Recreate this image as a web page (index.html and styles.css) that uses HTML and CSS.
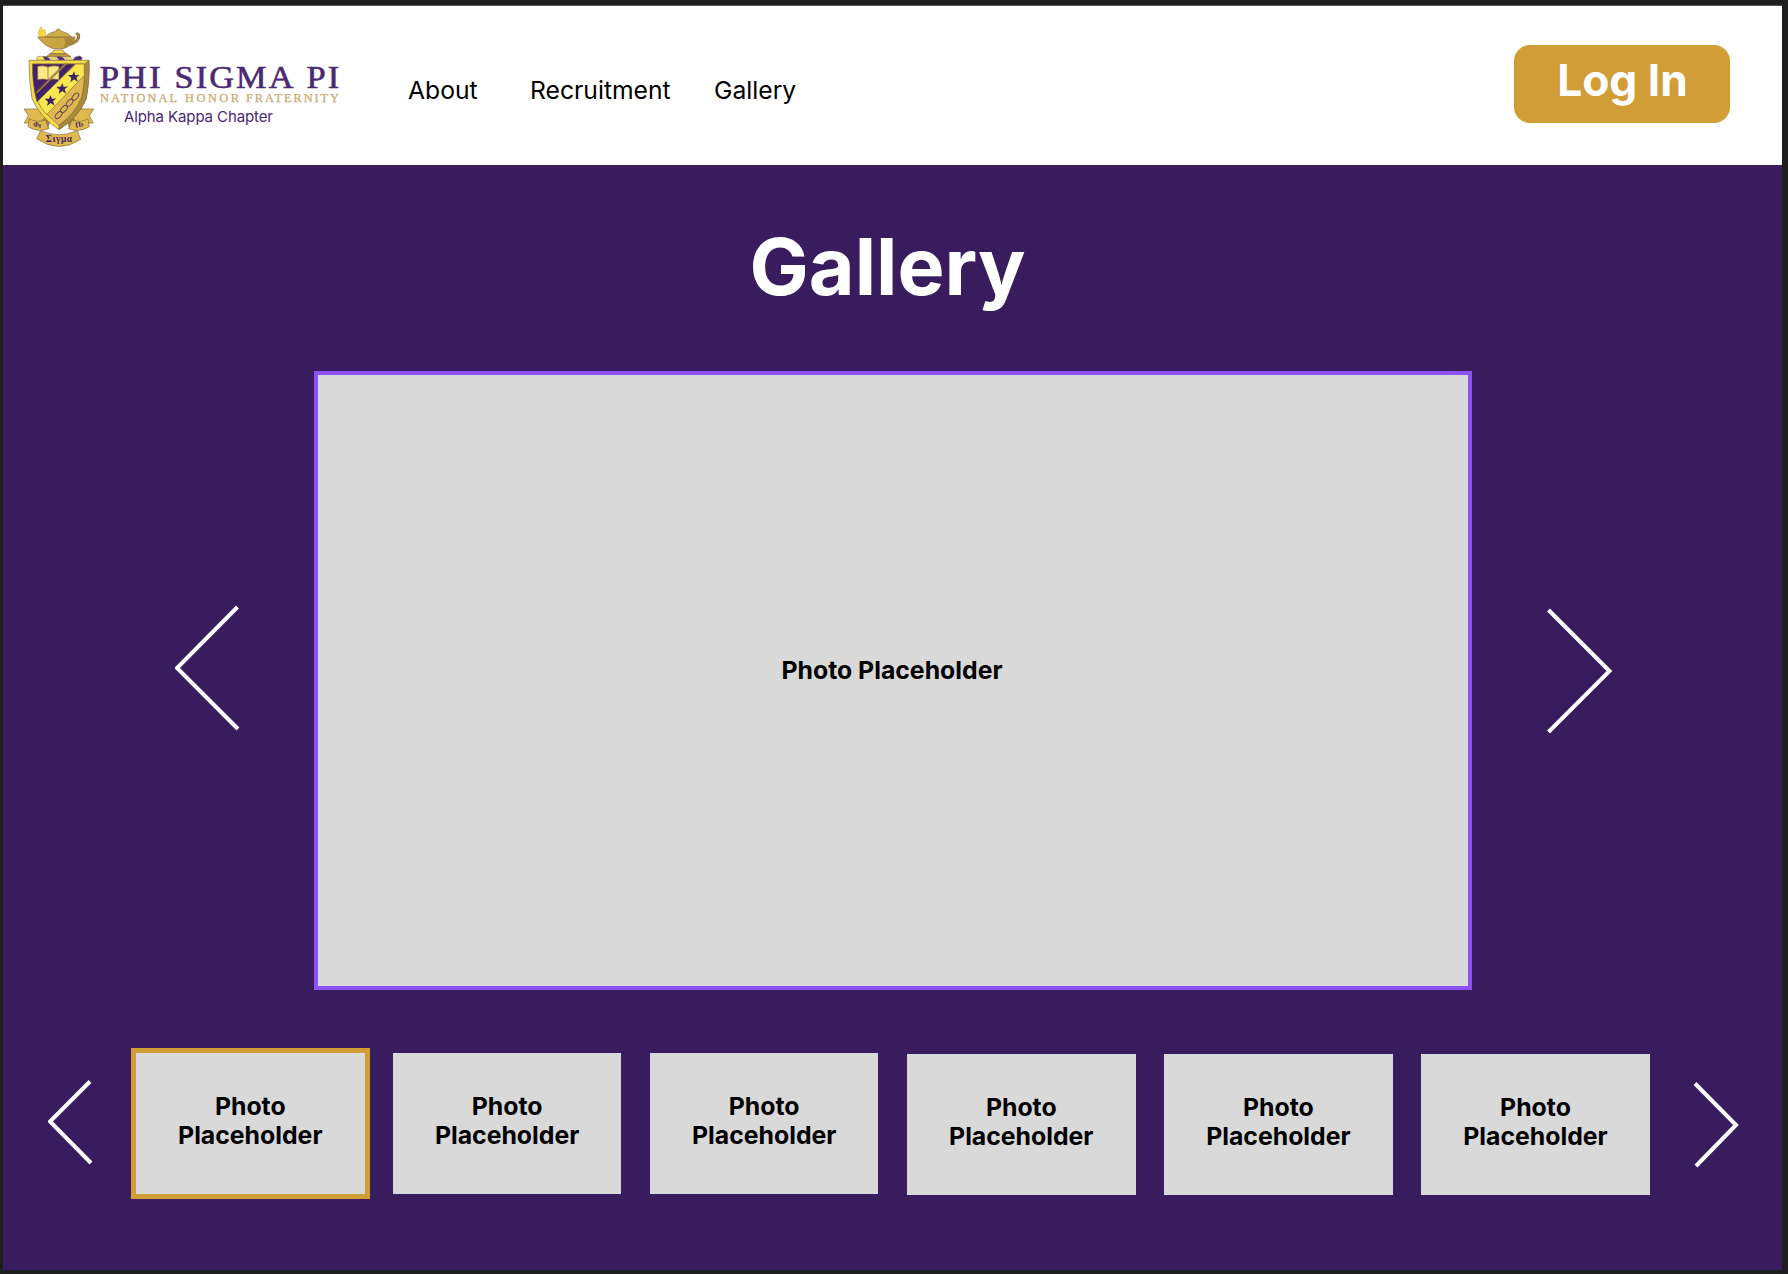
FILE: index.html
```html
<!DOCTYPE html>
<html lang="en">
<head>
<meta charset="utf-8">
<title>Gallery | Phi Sigma Pi</title>
<link rel="stylesheet" href="styles.css">
</head>
<body>
<div class="frame">
  <header class="header">
    <svg class="logo" viewBox="15 20 330 135" role="img" aria-label="Phi Sigma Pi National Honor Fraternity, Alpha Kappa Chapter">
      <g transform="translate(15 20) scale(.33333)" stroke="#85683f" stroke-width="2" stroke-linejoin="round">
        <!-- lamp -->
        <path fill="#f6d43c" stroke="#d9b04a" d="M74 50C66 40 72 32 78 20C80 28 84 27 86 31L90 29C90 38 94 42 90 50Z"/>
        <path fill="none" stroke="#7d6334" stroke-width="9" d="M164 73C180 69 192 59 191 47Q190 39 183 43"/>
        <path fill="none" stroke="#a98a40" stroke-width="6" d="M164 73C180 69 192 59 191 47Q190 39 183 43"/>
        <path fill="#c9a640" d="M68 51H181C176 70 158 84 143 86H117C98 82 83 70 68 51Z"/>
        <path fill="#a98738" stroke="none" d="M147 54H179C174 70 158 82 143 85C151 76 153 66 147 54Z"/>
        <path fill="#cfae48" d="M91 51C102 38 114 37 124 33Q124 27 130 27T137 33C149 37 162 40 170 51Z"/>
        <path fill="#f7df49" d="M117 90H144V93L154 101H106L117 93Z"/>
        <path fill="#bd983d" d="M105 101H155L168 110H94Z"/>
        <!-- wreath -->
        <g stroke-width="1.5">
          <rect x="65" y="109" width="24" height="12" rx="6" fill="#f3e267"/>
          <path fill="#4b2a7d" d="M84 110Q100 107 107 121H91Z"/>
          <path fill="#f3e267" d="M105 110Q120 107 128 121H112Z"/>
          <path fill="#4b2a7d" d="M124 110Q144 107 152 121H133Z"/>
          <path fill="#f3e267" d="M150 110Q166 107 174 121H157Z"/>
          <path fill="#4b2a7d" d="M174 121Q177 109 194 108Q206 112 198 121Z"/>
        </g>
        <!-- ribbon -->
        <g fill="#dfb94c">
          <path d="M27 267H72L94 290L74 309H28L40 287Z"/>
          <path d="M236 267H190L168 290L188 309H235L223 287Z"/>
          <path fill="#a98738" d="M75 309L94 288L105 303L98 327Z"/>
          <path fill="#a98738" d="M187 309L168 288L157 303L164 327Z"/>
          <path d="M43 296Q65 310 91 300L101 326Q71 339 39 320Z"/>
          <path d="M219 296Q197 310 171 300L161 326Q191 339 223 320Z"/>
        </g>
        <!-- shield -->
        <path fill="#f2dc48" d="M42 121H222Q224 185 213 238Q190 292 132 329Q75 291 51 236Q42 184 42 121Z"/>
        <path fill="#a98b3b" d="M222 121L208 133Q210 190 200 232Q179 283 132 315V329Q190 292 213 238Q224 185 222 121Z"/>
        <path fill="#dfb94f" d="M53 132H208Q210 190 200 232Q179 283 132 315Q85 281 64 232Q52 184 53 132Z"/>
        <path fill="#f8e64e" d="M183 132H208V166L95 284Q78 265 67 243Z"/>
        <path fill="#432169" d="M53 132H180L66 246Q51 193 53 132Z"/>
        <path fill="#f8e985" d="M68 139Q84 135 99 141Q115 135 132 139V179Q115 175 99 180Q84 175 68 179Z"/>
        <path fill="none" d="M99 141V180"/>
        <path fill="none" stroke="#b48d3b" stroke-width="5" d="M64 219L154 130"/>
        <path fill="none" stroke="#6d5131" stroke-width="1.5" d="M64 219L154 130M64 213L147 132"/>
        <g fill="#3e2168" stroke="none">
          <path id="star" d="M177 154L181 166L194 164L184 173L189 186L177 178L166 187L169 174L159 165L172 165Z"/>
          <use href="#star" x="-35" y="35"/>
          <use href="#star" x="-70" y="71"/>
        </g>
        <g fill="none" stroke="#68465a" stroke-width="3">
          <ellipse cx="131" cy="285" rx="13" ry="7" transform="rotate(-48 131 285)"/>
          <ellipse cx="147" cy="267" rx="13" ry="7" transform="rotate(-48 147 267)"/>
          <ellipse cx="164" cy="248" rx="13" ry="7" transform="rotate(-48 164 248)"/>
          <ellipse cx="181" cy="230" rx="13" ry="7" transform="rotate(-48 181 230)"/>
        </g>
        <path fill="#dfb94c" d="M77 332Q131 356 187 332L197 358Q132 402 65 356Z"/>
        <g class="motto" stroke="none">
          <text x="53" y="319" font-size="22" transform="rotate(12 53 319)">Φι</text>
          <text x="182" y="323" font-size="22" transform="rotate(-12 182 323)">Πι</text>
          <text x="92" y="366" font-size="28" textLength="79">Σιγμα</text>
        </g>
      </g>
      <g class="wordmark">
        <text x="99.500" y="88" textLength="63.500" lengthAdjust="spacingAndGlyphs">PHI</text>
        <text x="174.500" y="88" textLength="121" lengthAdjust="spacingAndGlyphs">SIGMA</text>
        <text x="306.500" y="88" textLength="35" lengthAdjust="spacingAndGlyphs">PI</text>
      </g>
      <g class="tagline">
        <text x="100" y="102.300" textLength="77">NATIONAL</text>
        <text x="185" y="102.300" textLength="54">HONOR</text>
        <text x="246" y="102.300" textLength="93">FRATERNITY</text>
      </g>
      <text class="chapter" x="124" y="122" textLength="149">Alpha Kappa Chapter</text>
    </svg>
    <nav class="nav">
      <a class="nav-about">About</a>
      <a class="nav-recruitment">Recruitment</a>
      <a class="nav-gallery">Gallery</a>
    </nav>
    <button class="login">Log In</button>
  </header>

  <main class="gallery">
    <h1 class="title">Gallery</h1>
    <section class="viewer">
      <svg class="arrow arrow-prev" viewBox="0 0 66 126"><path d="M62.500 2L2 63L63 124"/></svg>
      <div class="photo">Photo Placeholder</div>
      <svg class="arrow arrow-next" viewBox="0 0 66 126"><path d="M1.500 2L62.500 63L1.500 124"/></svg>
    </section>
    <section class="strip">
      <svg class="step step-prev" viewBox="0 0 46 88"><path d="M42 2.500L2 42.500L43 84"/></svg>
      <div class="thumbs">
        <div class="thumb selected">Photo<br>Placeholder</div>
        <div class="thumb">Photo<br>Placeholder</div>
        <div class="thumb">Photo<br>Placeholder</div>
        <div class="thumb lower">Photo<br>Placeholder</div>
        <div class="thumb lower">Photo<br>Placeholder</div>
        <div class="thumb lower">Photo<br>Placeholder</div>
      </div>
      <svg class="step step-next" viewBox="0 0 46 88"><path d="M2 2.500L43 44L3 85"/></svg>
    </section>
  </main>
</div>
</body>
</html>
```
FILE: styles.css
```css
* { box-sizing: border-box; }

body {
  margin: 0;
  background: #1e1e1e;
  font-family: Inter, "Liberation Sans", sans-serif;
  color: #000;
}

.frame {
  height: 1274px;
  padding: 5px 6px 4px 3px;
  display: flex;
  flex-direction: column;
}

/* header */
.header {
  height: 160px;
  flex: none;
  display: flex;
  align-items: flex-start;
  padding: 0 52px 0 12px;
  background: #fff;
  border-top: 1px solid #555;
}

.logo { width: 330px; height: 135px; margin-top: 14px; flex: none; }

.motto { font-family: "Liberation Serif", serif; font-weight: 700; fill: #432169; }
.wordmark { font-family: "Liberation Serif", serif; font-size: 32px; letter-spacing: 2px; fill: #4a2a72; stroke: #4a2a72; stroke-width: .6px; }
.tagline { font-family: "Liberation Serif", serif; font-size: 12.3px; fill: #c8aa70; stroke: #c8aa70; stroke-width: .25px; }
.chapter { font-size: 15px; fill: #4b2679; }

.nav {
  display: flex;
  margin: 69px auto 0 63px;
  font-size: 24.700px;
  line-height: 30px;
}

.nav-about { width: 122px; }
.nav-recruitment { width: 184px; }

.login {
  width: 216px;
  height: 78px;
  margin-top: 39px;
  padding: 0 0 9px 1px;
  border: 0;
  border-radius: 16px;
  background: #d19d36;
  color: #fff;
  font: 700 44.300px/54px Inter, "Liberation Sans", sans-serif;
}

/* gallery */
.gallery {
  flex: 1;
  display: flex;
  flex-direction: column;
  background: #391c5e;
}

.title {
  margin: 53px 10px 0 0;
  height: 153px;
  text-align: center;
  font-size: 79px;
  font-weight: 700;
  line-height: 96px;
  color: #fff;
}

.arrow, .step { flex: none; fill: none; stroke: #fff; stroke-width: 4px; }

.viewer { display: flex; align-items: flex-start; padding-left: 172px; }

.arrow { width: 66px; height: 126px; }
.arrow-prev { margin: 234px 73px 0 0; }
.arrow-next { margin: 237px 0 0 75px; }

.photo {
  width: 1158px;
  height: 619px;
  padding: 0 2px 22px 0;
  display: flex;
  align-items: center;
  justify-content: center;
  background: #d9d9d9;
  border: 4px solid #8c52f5;
  font-size: 24.800px;
  font-weight: 700;
}

.strip { display: flex; align-items: flex-start; padding: 58px 0 0 45px; }

.step { width: 46px; height: 88px; }
.step-prev { margin: 31px 37px 0 0; }
.step-next { margin: 33px 0 0 43px; }

.thumbs { display: flex; gap: 28.500px; }

.thumb {
  width: 228.600px;
  height: 141px;
  margin-top: 5px;
  padding-top: 39px;
  background: #d9d9d9;
  text-align: center;
  font-size: 24.800px;
  font-weight: 700;
  line-height: 29.300px;
}

.thumb.lower { margin-top: 6px; }

.thumb.selected {
  width: 238.600px;
  height: 151px;
  margin: 0 -5.300px 0 0;
  border: 5px solid #d19d36;
}
```
